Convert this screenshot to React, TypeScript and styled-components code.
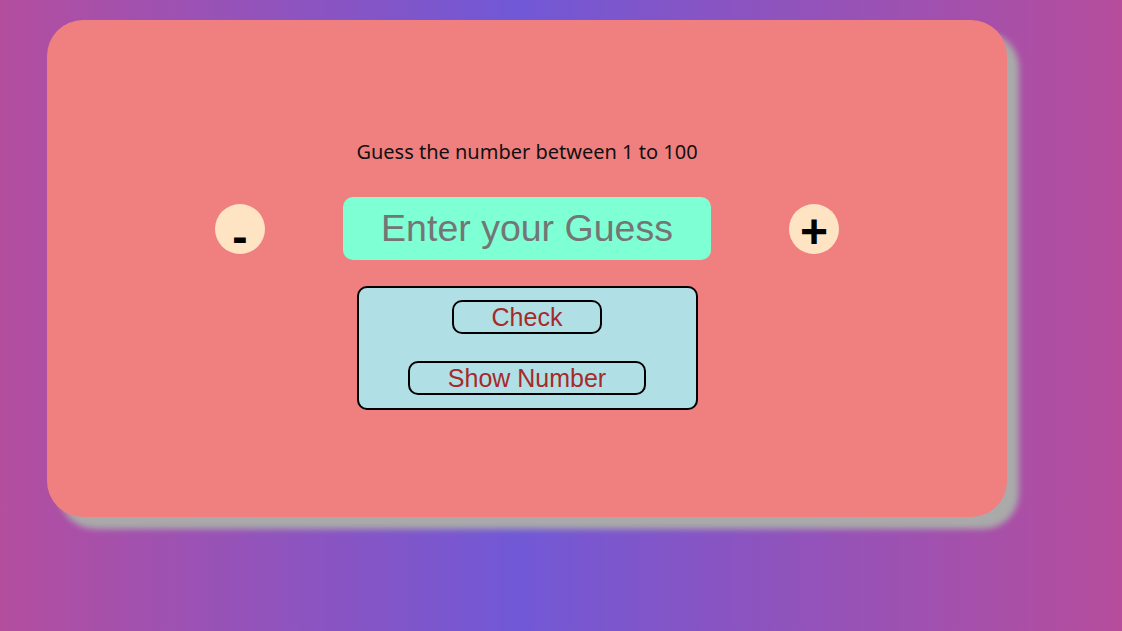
import React from "react";
import styled, { createGlobalStyle } from "styled-components";

const GlobalStyle = createGlobalStyle`
  html, body {
    margin: 0;
    padding: 0;
  }
  body {
    min-height: 100vh;
    background: linear-gradient(90deg, #b44e9f 0%, #7158d6 46%, #b64d9c 100%);
    font-family: "Liberation Sans", Arial, sans-serif;
  }
`;

const Page = styled.div`
  min-height: 100vh;
  box-sizing: border-box;
  padding: 20px 0 0 47px;
  display: flex;
  align-items: flex-start;
`;

const Card = styled.main`
  width: 960px;
  height: 497px;
  box-sizing: border-box;
  background: #f08080;
  border-radius: 36px;
  box-shadow: 12px 12px 6px #aaaaaa;
  display: flex;
  flex-direction: column;
  align-items: center;
  padding-top: 118px;
`;

const Heading = styled.p`
  margin: 0;
  font-family: "Noto Sans", "Open Sans", sans-serif;
  font-size: 20px;
  line-height: 28px;
  color: #111;
`;

const Row = styled.div`
  display: flex;
  align-items: center;
  gap: 78px;
  margin-top: 31px;
`;

const RoundButton = styled.button<{ $minus?: boolean }>`
  width: 50px;
  height: 50px;
  border: none;
  border-radius: 50%;
  background: #ffe4c4;
  color: #000;
  font-family: "Liberation Sans", Arial, sans-serif;
  font-size: ${(p) => (p.$minus ? "46px" : "48px")};
  font-weight: 700;
  line-height: 1;
  padding: ${(p) => (p.$minus ? "14px 0 0" : "7px 0 0")};
  display: flex;
  align-items: center;
  justify-content: center;
  box-sizing: border-box;
  cursor: pointer;
`;

const GuessInput = styled.input`
  width: 368px;
  height: 63px;
  box-sizing: border-box;
  border: none;
  border-radius: 10px;
  background: #7fffd4;
  font-family: "Liberation Sans", Arial, sans-serif;
  font-size: 37.5px;
  text-align: center;
  color: #000;
  outline: none;
  padding: 0;
  &::placeholder {
    color: #757575;
  }
`;

const ActionBox = styled.div`
  margin-top: 26px;
  width: 341px;
  box-sizing: border-box;
  border: 2px solid #000;
  border-radius: 10px;
  background: #b0e0e6;
  display: flex;
  flex-direction: column;
  align-items: center;
  gap: 27px;
  padding: 12px 0 13px;
`;

const ActionButton = styled.button`
  height: 34px;
  box-sizing: border-box;
  border: 2px solid #000;
  border-radius: 10px;
  background: transparent;
  color: #a52a2a;
  font-family: "Liberation Sans", Arial, sans-serif;
  font-size: 25px;
  line-height: 1;
  padding: 0 38px;
  cursor: pointer;
`;

export default function App() {
  return (
    <>
      <GlobalStyle />
      <Page>
        <Card>
          <Heading>Guess the number between 1 to 100</Heading>
          <Row>
            <RoundButton $minus>-</RoundButton>
            <GuessInput type="text" placeholder="Enter your Guess" />
            <RoundButton>+</RoundButton>
          </Row>
          <ActionBox>
            <ActionButton>Check</ActionButton>
            <ActionButton>Show Number</ActionButton>
          </ActionBox>
        </Card>
      </Page>
    </>
  );
}
